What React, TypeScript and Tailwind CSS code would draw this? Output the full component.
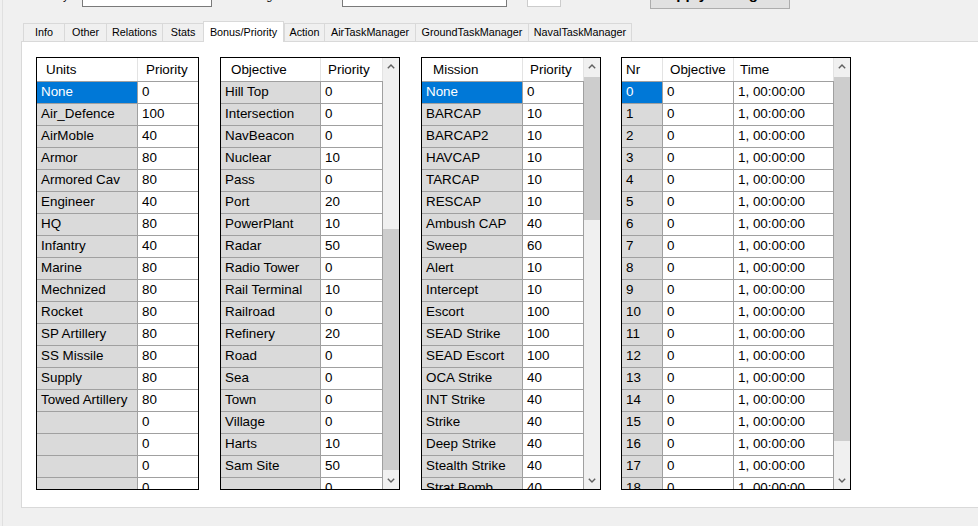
import React from "react";

type Col = { label: string; w: string; hp: string; gray?: boolean; last?: boolean };
type GridProps = {
  cols: Col[];
  rows: string[][];
  selected?: number;
  thumb?: string;
  className: string;
};

const tabs = [
  { name: "Info", w: "w-[41px]" },
  { name: "Other", w: "w-[42px]" },
  { name: "Relations", w: "w-[56px]" },
  { name: "Stats", w: "w-[41px]" },
  { name: "Bonus/Priority", w: "w-[81px]", active: true },
  { name: "Action", w: "w-[40px]" },
  { name: "AirTaskManager", w: "w-[91px]" },
  { name: "GroundTaskManager", w: "w-[113px]" },
  { name: "NavalTaskManager", w: "w-[104px]" },
];

const units: string[][] = [
  ["None", "0"], ["Air_Defence", "100"], ["AirMoble", "40"], ["Armor", "80"], ["Armored Cav", "80"],
  ["Engineer", "40"], ["HQ", "80"], ["Infantry", "40"], ["Marine", "80"], ["Mechnized", "80"],
  ["Rocket", "80"], ["SP Artillery", "80"], ["SS Missile", "80"], ["Supply", "80"], ["Towed Artillery", "80"],
  ["", "0"], ["", "0"], ["", "0"], ["", "0"],
];

const objectives: string[][] = [
  ["Hill Top", "0"], ["Intersection", "0"], ["NavBeacon", "0"], ["Nuclear", "10"], ["Pass", "0"],
  ["Port", "20"], ["PowerPlant", "10"], ["Radar", "50"], ["Radio Tower", "0"], ["Rail Terminal", "10"],
  ["Railroad", "0"], ["Refinery", "20"], ["Road", "0"], ["Sea", "0"], ["Town", "0"],
  ["Village", "0"], ["Harts", "10"], ["Sam Site", "50"], ["", "0"],
];

const missions: string[][] = [
  ["None", "0"], ["BARCAP", "10"], ["BARCAP2", "10"], ["HAVCAP", "10"], ["TARCAP", "10"],
  ["RESCAP", "10"], ["Ambush CAP", "40"], ["Sweep", "60"], ["Alert", "10"], ["Intercept", "10"],
  ["Escort", "100"], ["SEAD Strike", "100"], ["SEAD Escort", "100"], ["OCA Strike", "40"], ["INT Strike", "40"],
  ["Strike", "40"], ["Deep Strike", "40"], ["Stealth Strike", "40"], ["Strat Bomb", "40"],
];

const times: string[][] = Array.from({ length: 19 }, (_, i) => [String(i), "0", "1, 00:00:00"]);

function Chevron({ up }: { up?: boolean }) {
  return (
    <svg width="8" height="5" viewBox="0 0 8 5">
      <polyline
        points={up ? "0.8,4.2 4,1 7.2,4.2" : "0.8,0.8 4,4 7.2,0.8"}
        fill="none"
        stroke="#606060"
        strokeWidth="1.4"
      />
    </svg>
  );
}

function ScrollBar({ thumb }: { thumb: string }) {
  return (
    <div className="flex w-[16px] flex-col bg-[#f0f0f0]">
      <div className="flex h-[17px] shrink-0 items-center justify-center">
        <Chevron up />
      </div>
      <div className="flex-1">
        <div className={`w-full bg-[#cdcdcd] ${thumb}`} />
      </div>
      <div className="flex h-[17px] shrink-0 items-center justify-center">
        <Chevron />
      </div>
    </div>
  );
}

function Grid({ cols, rows, selected, thumb, className }: GridProps) {
  return (
    <div className={`flex h-[433px] border border-black bg-white ${className}`}>
      <div className="flex flex-col overflow-hidden">
        <div className="flex h-[24px] shrink-0 border-b border-[#a0a0a0]">
          {cols.map((c, i) => (
            <div
              key={c.label + i}
              className={`flex items-center pt-[2px] ${c.w} ${c.hp} ${c.last ? "" : "border-r border-[#e3e3e3]"}`}
            >
              {c.label}
            </div>
          ))}
        </div>
        {rows.map((r, ri) => (
          <div key={ri} className="flex h-[22px] shrink-0">
            {cols.map((c, ci) => {
              const sel = ri === selected && ci === 0;
              const bg = sel ? "bg-[#0078d7] text-white" : c.gray ? "bg-[#dadada]" : "bg-white";
              return (
                <div
                  key={ci}
                  className={`flex items-center overflow-hidden whitespace-nowrap border-b border-[#a0a0a0] pl-[4px] ${c.w} ${bg} ${c.last ? "" : "border-r"}`}
                >
                  {r[ci]}
                </div>
              );
            })}
          </div>
        ))}
      </div>
      {thumb && <ScrollBar thumb={thumb} />}
    </div>
  );
}

export default function App() {
  return (
    <div className="h-[526px] w-[978px] overflow-hidden bg-[#f0f0f0] font-['Liberation_Sans',Arial,sans-serif] text-black">
      <div className="ml-[2px] flex h-full flex-col border-l border-[#e0e0e0]">
        {/* form fields above the tabs, mostly scrolled out of view */}
        <div className="h-[21px] shrink-0">
          <div className="-mt-[20px] flex items-start whitespace-nowrap text-[11px]">
            <div className="ml-[27px] mt-[8px] w-[42px]">Country</div>
            <div className="ml-[10px] mt-[6px] h-[21px] w-[130px] border border-[#7a7a7a] bg-white" />
            <div className="ml-[28px] mt-[8px] w-[96px]">Change Team Name</div>
            <div className="ml-[6px] mt-[6px] h-[21px] w-[165px] border border-[#7a7a7a] bg-white" />
            <div className="ml-[6px] mt-[8px] w-[12px]">Nr</div>
            <div className="ml-[2px] mt-[6px] h-[21px] w-[34px] border border-[#cccccc] bg-white" />
            <div className="ml-[89px] flex h-[29px] w-[140px] items-center justify-center border border-[#adadad] bg-[#e1e1e1] text-[15px] font-bold">
              Apply Changes
            </div>
          </div>
        </div>

        <div className="flex h-[20px] shrink-0 items-end pl-[20px] text-[10.8px]">
          {tabs.map((t) =>
            t.active ? (
              <div
                key={t.name}
                className={`relative z-10 -mb-px flex h-[21px] items-start justify-center whitespace-nowrap border-x border-t border-[#d9d9d9] bg-white pt-[2px] ${t.w}`}
              >
                {t.name}
              </div>
            ) : (
              <div
                key={t.name}
                className={`flex h-[18px] items-center justify-center whitespace-nowrap border-l border-t border-[#d9d9d9] last:border-r ${t.w}`}
              >
                {t.name}
              </div>
            )
          )}
        </div>

        <div className="ml-[18px] flex h-[467px] shrink-0 items-start border-y border-l border-[#d9d9d9] bg-white pl-[14px] pt-[15px] text-[13.4px]">
          <Grid
            className=""
            cols={[
              { label: "Units", w: "w-[101px]", hp: "pl-[9px]", gray: true },
              { label: "Priority", w: "w-[60px]", hp: "pl-[8px]", last: true },
            ]}
            rows={units}
            selected={0}
          />
          <Grid
            className="ml-[21px]"
            cols={[
              { label: "Objective", w: "w-[100px]", hp: "pl-[10px]", gray: true },
              { label: "Priority", w: "w-[62px]", hp: "pl-[7px]" },
            ]}
            rows={objectives}
            thumb="mt-[154px] h-[241px]"
          />
          <Grid
            className="ml-[21px]"
            cols={[
              { label: "Mission", w: "w-[101px]", hp: "pl-[11px]", gray: true },
              { label: "Priority", w: "w-[61px]", hp: "pl-[7px]" },
            ]}
            rows={missions}
            selected={0}
            thumb="mt-[2px] h-[143px]"
          />
          <Grid
            className="ml-[20px]"
            cols={[
              { label: "Nr", w: "w-[41px]", hp: "pl-[4px]", gray: true },
              { label: "Objective", w: "w-[71px]", hp: "pl-[7px]" },
              { label: "Time", w: "w-[100px]", hp: "pl-[6px]" },
            ]}
            rows={times}
            selected={0}
            thumb="mt-[2px] h-[364px]"
          />
        </div>
      </div>
    </div>
  );
}
